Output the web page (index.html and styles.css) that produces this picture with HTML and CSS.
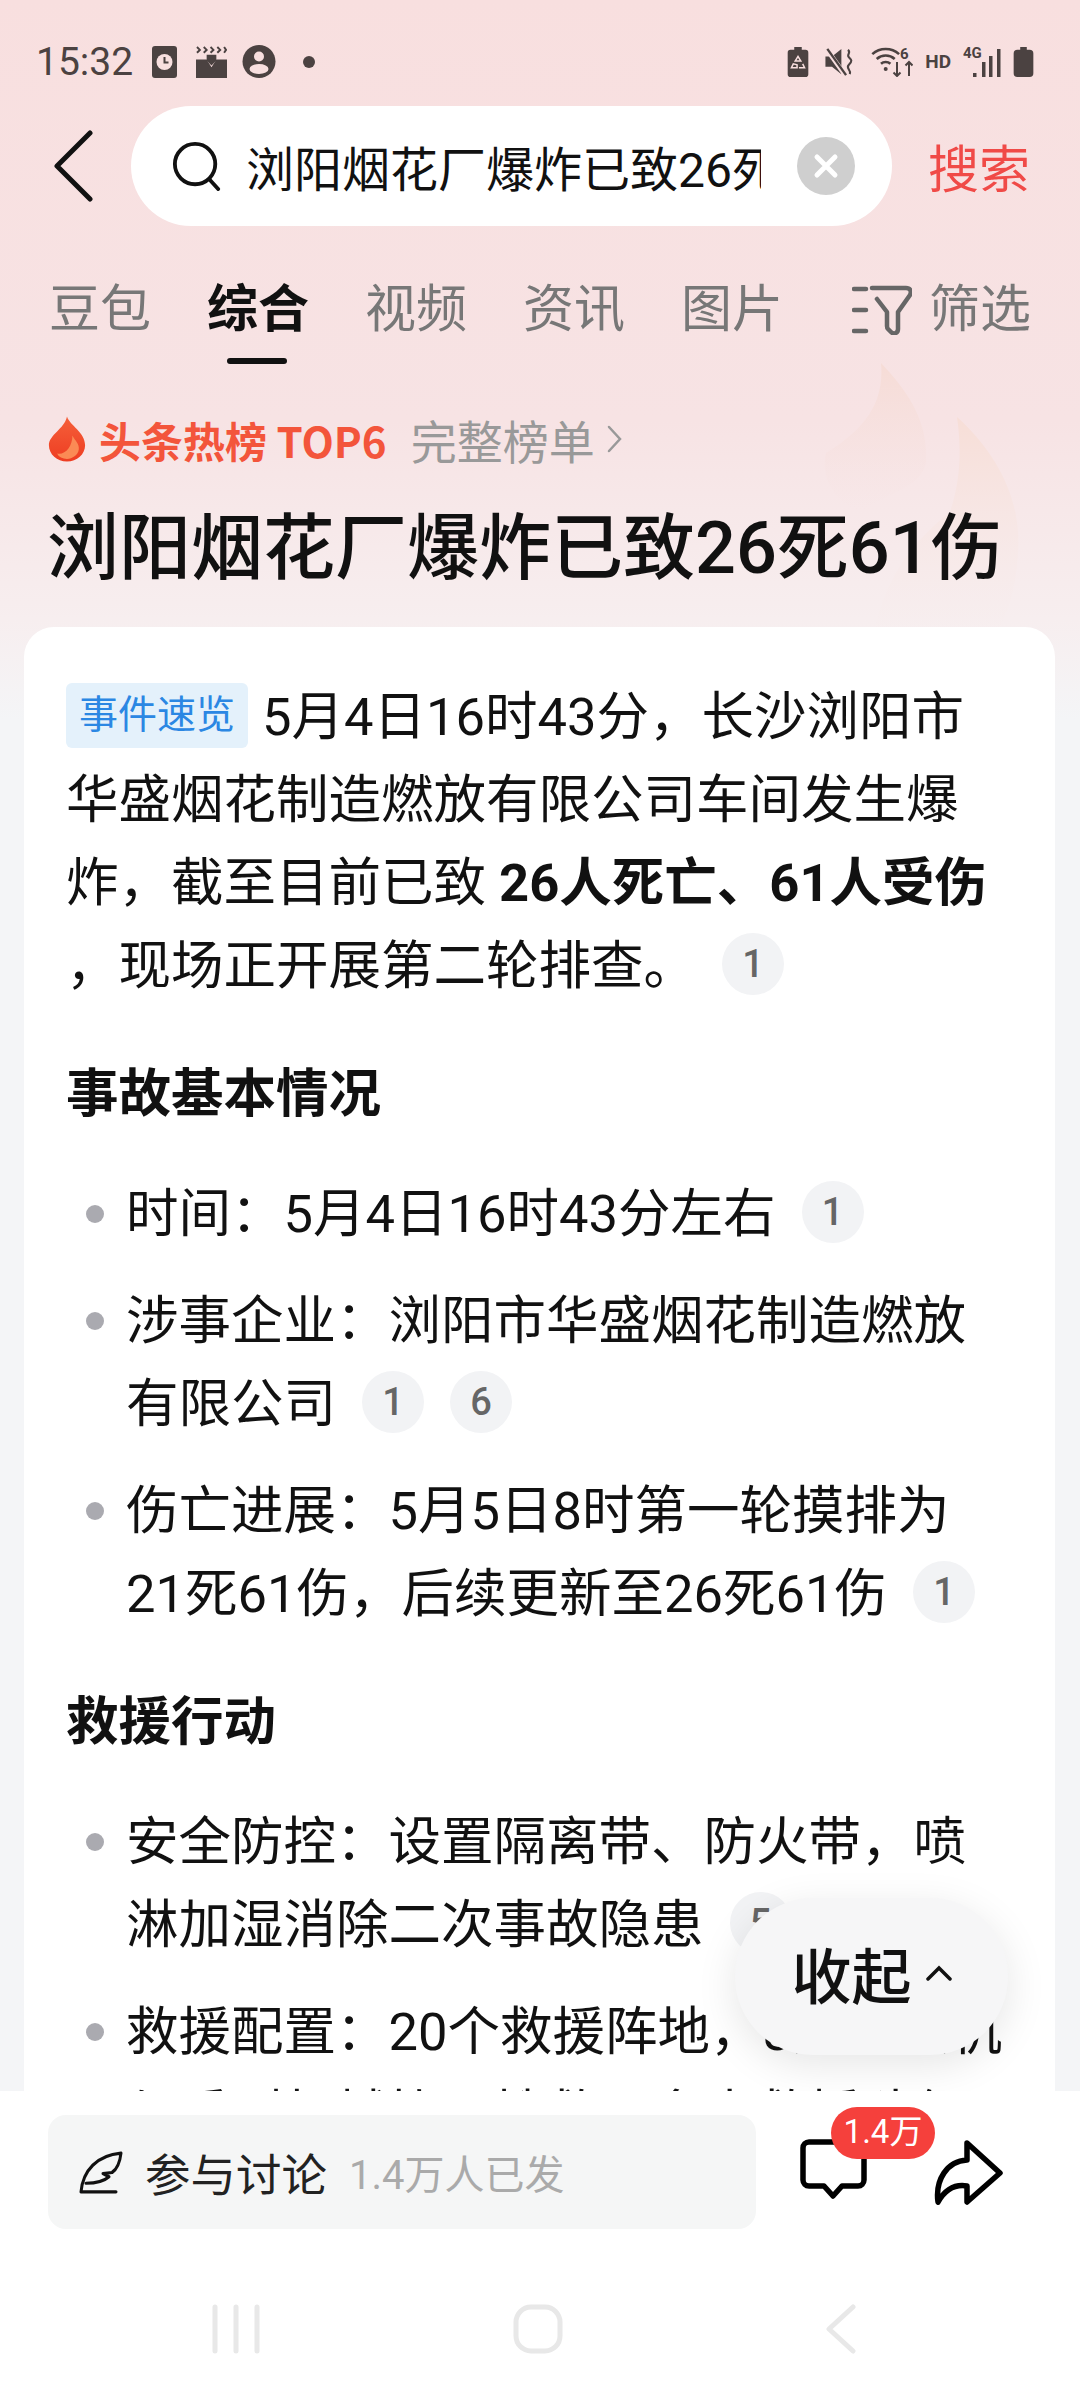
FILE: index.html
```html
<!DOCTYPE html>
<html lang="zh-CN">
<head>
    <meta charset="UTF-8">
    <meta name="viewport" content="width=device-width, initial-scale=1.0">
    <title>浏阳烟花厂爆炸已致26死61伤 - 搜索</title>
    <link rel="stylesheet" href="styles.css">
</head>
<body>
<div class="screen">
    <!-- background flames behind the hot list title -->
    <svg class="bg-flame" width="230" height="290" viewBox="0 0 230 290">
        <defs>
            <linearGradient id="fadeA" x1="0" y1="0" x2="0" y2="1"><stop offset="0" stop-color="#f6dcd6"/><stop offset="1" stop-color="#f6e3e3" stop-opacity="0"/></linearGradient>
            <linearGradient id="fadeB" x1="0" y1="0" x2="0" y2="1"><stop offset="0" stop-color="#f7ded7"/><stop offset="1" stop-color="#f7eeee" stop-opacity="0"/></linearGradient>
        </defs>
        <path d="M81 1C108 30 128 58 126 100C122 125 90 130 60 150C35 140 20 115 26 91C60 70 85 45 81 1Z" fill="url(#fadeA)"/>
        <path d="M157 55C190 85 222 130 218 190C216 230 205 270 180 290H70C80 230 100 190 150 150C160 120 162 90 157 55Z" fill="url(#fadeB)"/>
    </svg>

    <div class="status-bar">
        <div class="status-left">
            <span class="clock">15:32</span>
            <svg class="alarm" width="25" height="32" viewBox="0 0 25 32"><rect width="25" height="32" rx="3" fill="#4b4241"/><circle cx="12.500" cy="16" r="8" fill="#f8dfdf"/><path d="M12.500 11v5.500h4" fill="none" stroke="#4b4241" stroke-width="2"/></svg>
            <svg class="film" width="31" height="32" viewBox="0 0 32 33"><path d="M0 14h11l5 8v11H0zM32 14H21l-5 8v11h16z" fill="#4b4241"/><path d="M1 1l3 3-3 3M8 1l3 3-3 3M15 1l3 3-3 3M22 1l3 3-3 3M29 1l2 3-2 3" fill="none" stroke="#4b4241" stroke-width="2"/><path d="M11 9h10v6l-5 5-5-5z" fill="#4b4241"/></svg>
            <svg class="person" width="34" height="33" viewBox="0 0 33 33"><circle cx="16.500" cy="16.500" r="16.500" fill="#4b4241"/><circle cx="16.500" cy="11.500" r="5" fill="#f8dfdf"/><ellipse cx="16.500" cy="24" rx="9.500" ry="5" fill="#f8dfdf"/></svg>
            <span class="status-dot"></span>
        </div>
        <div class="status-right">
            <svg width="22" height="30" viewBox="0 0 22 32"><path d="M7 0h8v3h4a3 3 0 0 1 3 3v23a3 3 0 0 1-3 3H3a3 3 0 0 1-3-3V6a3 3 0 0 1 3-3h4z" fill="#4b4241"/><path d="M11 10l3 5h-6zM6 18l-2 4h6v-3zM16 18l2 4h-6" fill="none" stroke="#f8dfdf" stroke-width="1.600"/></svg>
            <svg class="wide" width="29" height="30" viewBox="0 0 30 32"><path d="M0 10h7l10-8v27L7 21H0z" fill="#4b4241"/><path d="M1 2l20 28" stroke="#f8dfdf" stroke-width="5"/><path d="M2 2l20 28" stroke="#4b4241" stroke-width="2.500"/><path d="M24 3c4 3-2 5 1 8s4 4 0 8 3 5 1 10" fill="none" stroke="#4b4241" stroke-width="2.200"/></svg>
            <svg class="wide" width="43" height="30" viewBox="0 0 43 30"><path d="M2.300 7.100a20 20 0 0 1 26.800 0M6.700 12a13.500 13.500 0 0 1 18 0M11 16.800a7 7 0 0 1 9.400 0" fill="none" stroke="#4b4241" stroke-width="2.600"/><circle cx="15.700" cy="22" r="2" fill="#4b4241"/><path d="M27 15v14m-3.500-3.500 3.500 3.500 3.500-3.500M39 29V15m-3.500 3.500 3.500-3.500 3.500 3.500" fill="none" stroke="#4b4241" stroke-width="2"/><text x="30" y="12" class="status-tiny">6</text></svg>
            <span class="status-hd">HD</span>
            <svg width="38" height="30" viewBox="0 0 38 30"><text x="0" y="11" class="status-tiny">4G</text><rect x="10" y="26" width="3.500" height="4" fill="#4b4241"/><rect x="19" y="15" width="3.500" height="15" fill="#4b4241"/><rect x="26" y="9" width="3.500" height="21" fill="#4b4241"/><rect x="34" y="2" width="3.500" height="28" fill="#4b4241"/></svg>
            <svg width="21" height="30" viewBox="0 0 21 32"><path d="M7 0h7v3h3a4 4 0 0 1 4 4v21a4 4 0 0 1-4 4H4a4 4 0 0 1-4-4V7a4 4 0 0 1 4-4h3z" fill="#4b4241"/></svg>
        </div>
    </div>

    <div class="search-row">
        <svg class="back" width="40" height="72" viewBox="0 0 40 72"><path d="M37 3L4 36l33 33" fill="none" stroke="#111" stroke-width="5" stroke-linecap="round" stroke-linejoin="round"/></svg>
        <div class="search-box">
            <svg width="50" height="50" viewBox="0 0 52 52"><circle cx="24" cy="24" r="21" fill="none" stroke="#111" stroke-width="4"/><path d="M39 40l9 10" stroke="#111" stroke-width="4" stroke-linecap="round"/></svg>
            <div class="search-text">浏阳烟花厂爆炸已致26死61伤</div>
            <svg class="clear" width="58" height="58" viewBox="0 0 58 58"><circle cx="29" cy="29" r="29" fill="#cfcfcf"/><path d="M20 20l18 18M38 20L20 38" stroke="#fff" stroke-width="5" stroke-linecap="round"/></svg>
        </div>
        <span class="search-btn">搜索</span>
    </div>

    <div class="tabs">
        <a class="tab">豆包</a>
        <a class="tab active">综合</a>
        <a class="tab">视频</a>
        <a class="tab">资讯</a>
        <a class="tab">图片</a>
        <a class="tab filter">
            <svg width="60" height="50" viewBox="0 0 60 50"><path d="M2 4h12M2 25h12M2 46h12" stroke="#666" stroke-width="4.500" stroke-linecap="round"/><path d="M20 3h34c4 0 6 3 4 7L46 27v17c0 4-4 6-7 3l-3-3c-1-1-1-2-1-3V27L25 14" fill="none" stroke="#666" stroke-width="4.500" stroke-linecap="round" stroke-linejoin="round"/></svg>
            筛选
        </a>
    </div>

    <div class="hot-row">
        <svg width="38" height="48" viewBox="0 0 42 50"><defs><linearGradient id="flameFill" x1="0" y1="0" x2="0" y2="1"><stop offset="0" stop-color="#f5603a"/><stop offset="1" stop-color="#ee3d22"/></linearGradient></defs><path d="M21 0c3 10 20 17 20 32 0 10-9 18-20 18S1 42 1 32C1 20 18 14 21 0z" fill="url(#flameFill)"/><path d="M27 21c3 6 8 9 7 16-1 6-7 10-13 10-5 0-9-2-11-6 9 2 17-8 17-20z" fill="#fb8b55"/></svg>
        <span class="hot-title">头条热榜 TOP6</span>
        <span class="hot-more">完整榜单</span>
        <svg width="16" height="30" viewBox="0 0 16 30"><path d="M2 3l11 12L2 27" fill="none" stroke="#999" stroke-width="2.500" stroke-linecap="round"/></svg>
    </div>

    <h1 class="headline">浏阳烟花厂爆炸已致26死61伤</h1>

    <main class="card">
        <p class="lead"><span class="tag">事件速览</span>5月4日16时43分，长沙浏阳市华盛烟花制造燃放有限公司车间发生爆炸，截至目前已致 <b>26人死亡、61人受伤</b><br>，现场正开展第二轮排查。<span class="cite">1</span></p>

        <h2>事故基本情况</h2>
        <ul>
            <li>时间：5月4日16时43分左右<span class="cite">1</span></li>
            <li>涉事企业：浏阳市华盛烟花制造燃放有限公司<span class="cite">1</span><span class="cite">6</span></li>
            <li>伤亡进展：5月5日8时第一轮摸排为<br>21死61伤，后续更新至26死61伤<span class="cite">1</span></li>
        </ul>

        <h2>救援行动</h2>
        <ul>
            <li>安全防控：设置隔离带、防火带，喷淋加湿消除二次事故隐患<span class="cite">5</span></li>
            <li>救援配置：20个救援阵地，8架无人机与重型机械协同搜救，多支救援队伍参与工作</li>
        </ul>
    </main>

    <div class="collapse-btn">收起<svg width="26" height="16" viewBox="0 0 26 16"><path d="M2 14L13 3l11 11" fill="none" stroke="#111" stroke-width="3.500" stroke-linecap="round"/></svg></div>

    <footer class="bottom-bar">
        <div class="action-row">
            <div class="discuss">
                <svg width="44" height="43" viewBox="0 0 44 40" preserveAspectRatio="none"><path d="M2 38C4 18 18 4 42 2C41 10 38 17 33 20L24 21L30 24C24 29 16 30 7 30M2 38H37" fill="none" stroke="#111" stroke-width="3" stroke-linecap="round" stroke-linejoin="round"/></svg>
                <span class="discuss-label">参与讨论</span>
                <span class="discuss-count">1.4万人已发</span>
            </div>
            <div class="comment">
                <svg width="67" height="60" viewBox="0 0 67 60"><path d="M9 3h49a6 6 0 0 1 6 6v32a6 6 0 0 1-6 6H42l-9 10-9-10H9a6 6 0 0 1-6-6V9a6 6 0 0 1 6-6z" fill="none" stroke="#000" stroke-width="5.500" stroke-linejoin="round"/></svg>
                <span class="badge">1.4万</span>
            </div>
            <svg class="share" width="70" height="65" viewBox="0 0 70 65"><path d="M34 3l33 30-33 29V46C22 44 12 50 5 62 2 40 14 21 34 20z" fill="none" stroke="#000" stroke-width="5.500" stroke-linejoin="round"/></svg>
        </div>
        <div class="nav-bar">
            <svg width="48" height="50" viewBox="0 0 48 50"><path d="M3 3v44M24 3v44M45 3v44" stroke="#e8e8e8" stroke-width="5" stroke-linecap="round"/></svg>
            <svg class="nav-home" width="50" height="50" viewBox="0 0 50 50"><rect x="3" y="3" width="44" height="44" rx="15" fill="none" stroke="#e8e8e8" stroke-width="5"/></svg>
            <svg class="nav-back" width="33" height="50" viewBox="0 0 33 50"><path d="M29 3L5 25l24 22" fill="none" stroke="#e8e8e8" stroke-width="5" stroke-linecap="round" stroke-linejoin="round"/></svg>
        </div>
    </footer>
</div>
</body>
</html>
```

FILE: styles.css
```css
/* Base */
* {
    box-sizing: border-box;
}

body {
    margin: 0;
    font-family: Roboto, "Noto Sans CJK SC", sans-serif;
    color: #111;
}

.screen {
    position: relative;
    width: 1080px;
    height: 2400px;
    overflow: hidden;
    background: linear-gradient(#f8dfdf 0, #f7e3e4 420px, #f7eeef 620px, #f4f5f7 720px);
}

.bg-flame {
    position: absolute;
    left: 800px;
    top: 362px;
}

/* Status bar */
.status-bar {
    height: 106px;
    padding: 45px 46px 0 36px;
    display: flex;
    justify-content: space-between;
    align-items: flex-start;
}

.status-left,
.status-right {
    display: flex;
    align-items: center;
    height: 33px;
}

.status-right {
    gap: 12px;
}

.status-right .wide {
    margin-left: 4px;
}

.clock {
    font-size: 39px;
    color: #4b4241;
}

.alarm {
    margin-left: 19px;
}

.film {
    margin-left: 19px;
}

.person {
    margin-left: 15px;
}

.status-dot {
    width: 12px;
    height: 12px;
    margin-left: 27px;
    border-radius: 50%;
    background: #4b4241;
}

.status-hd {
    font-size: 19px;
    font-weight: 700;
    color: #4b4241;
}

.status-tiny {
    font-size: 15px;
    font-weight: 700;
    fill: #4b4241;
}

/* Search */
.search-row {
    display: flex;
    align-items: center;
    height: 120px;
    padding-left: 53px;
}

.back {
    flex: none;
}

.search-box {
    width: 761px;
    height: 120px;
    margin-left: 38px;
    padding-left: 41px;
    display: flex;
    align-items: center;
    background: #fff;
    border-radius: 60px;
}

.search-box svg {
    flex: none;
}

.search-text {
    width: 515px;
    margin-left: 24px;
    font-size: 48px;
    white-space: nowrap;
    overflow: hidden;
}

.clear {
    margin-left: 36px;
}

.search-btn {
    margin-left: 36px;
    font-size: 51px;
    color: #f04a47;
}

/* Tabs */
.tabs {
    display: flex;
    height: 180px;
    padding: 48px 0 0 49px;
    font-size: 51px;
    color: #777;
}

.tab {
    position: relative;
    width: 158px;
    height: 72px;
    line-height: 72px;
}

.tab.active {
    color: #111;
    font-weight: 700;
}

.tab.active::after {
    content: "";
    position: absolute;
    left: 20px;
    top: 84px;
    width: 60px;
    height: 6px;
    border-radius: 3px;
    background: #111;
}

.tab.filter {
    width: auto;
    margin-left: 13px;
    display: flex;
    align-items: center;
    gap: 17px;
}

/* Hot list */
.hot-row {
    position: relative;
    display: flex;
    align-items: center;
    height: 60px;
    margin-top: 3px;
    padding-left: 48px;
}

.hot-title {
    margin-left: 13px;
    font-family: "Noto Sans CJK SC", sans-serif;
    font-size: 42px;
    font-weight: 700;
    color: #f3553b;
}

.hot-more {
    margin: 0 12px 0 24px;
    font-size: 46px;
    color: #999;
}

.headline {
    position: relative;
    margin: 28px 0 0;
    padding-left: 47px;
    font-size: 72px;
    font-weight: 500;
    line-height: 104px;
    white-space: nowrap;
}

/* Answer card */
.card {
    position: relative;
    height: 1464px;
    margin: 26px 25px 0 24px;
    padding: 49px 46px 0 42px;
    overflow: hidden;
    background: #fff;
    border-radius: 30px 30px 0 0;
    font-size: 52.500px;
    line-height: 83px;
}

.lead {
    margin: 0;
}

.tag {
    display: inline-block;
    height: 65px;
    margin-right: 14px;
    padding: 0 13px;
    line-height: 65px;
    font-size: 39px;
    vertical-align: 7px;
    color: #2b87e3;
    background: #e4f1fb;
    border-radius: 6px;
}

.cite {
    display: inline-block;
    width: 62px;
    height: 62px;
    margin-left: 26px;
    border-radius: 50%;
    background: #f2f3f5;
    color: #666;
    font-size: 38px;
    font-weight: 500;
    line-height: 62px;
    text-align: center;
    vertical-align: 7px;
}

h2 {
    margin: 46px 0 0;
    font-size: 52.500px;
    font-weight: 700;
    line-height: 80px;
}

ul {
    margin: 39px 0 0;
    padding: 0;
    list-style: none;
}

li {
    position: relative;
    margin-bottom: 24px;
    padding-left: 60px;
}

li::before {
    content: "";
    position: absolute;
    left: 20px;
    top: 32px;
    width: 18px;
    height: 18px;
    border-radius: 50%;
    background: #aaaab0;
}

/* Floating collapse button */
.collapse-btn {
    position: absolute;
    left: 735px;
    top: 1898px;
    width: 273px;
    height: 157px;
    padding-bottom: 8px;
    display: flex;
    align-items: center;
    justify-content: center;
    gap: 14px;
    background: #f6f6f7;
    border-radius: 78px;
    box-shadow: 0 10px 40px rgba(0, 0, 0, 0.1);
    font-size: 60px;
    font-weight: 500;
}

/* Bottom bar */
.bottom-bar {
    position: absolute;
    left: 0;
    top: 2091px;
    width: 1080px;
    height: 309px;
    background: #fff;
}

.action-row {
    display: flex;
    align-items: center;
    height: 162px;
    padding-left: 48px;
}

.discuss {
    display: flex;
    align-items: center;
    width: 708px;
    height: 114px;
    padding-left: 31px;
    background: #f5f6f6;
    border-radius: 18px;
}

.discuss-label {
    margin-left: 22px;
    font-size: 45.500px;
    color: #222;
}

.discuss-count {
    margin-left: 22px;
    font-size: 40px;
    color: #aaa;
}

.comment {
    position: relative;
    margin-left: 44px;
    margin-top: -6px;
    display: flex;
}

.badge {
    position: absolute;
    left: 31px;
    top: -32px;
    width: 104px;
    height: 52px;
    background: #f5403c;
    border-radius: 26px;
    color: #fff;
    font-size: 33px;
    line-height: 50px;
    text-align: center;
    white-space: nowrap;
}

.share {
    margin-left: 66px;
}

.nav-bar {
    display: flex;
    align-items: center;
    height: 152px;
    padding-left: 212px;
}

.nav-home {
    margin-left: 253px;
}

.nav-back {
    margin-left: 261px;
}
```
